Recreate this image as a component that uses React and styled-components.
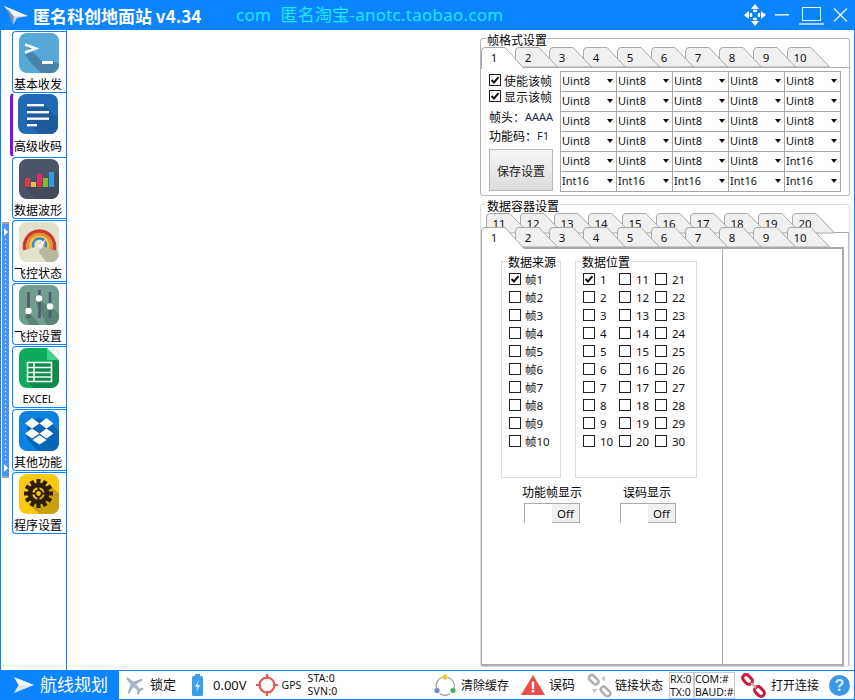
import React from "react";
import styled, { createGlobalStyle } from "styled-components";

const Global = createGlobalStyle`
  html, body { margin: 0; padding: 0; background: #fff; }
  body { font-family: "Noto Sans", "Noto Sans CJK SC", sans-serif; font-size: 12px; color: #111; }
`;

const BLUE = "#0a84ff";
const CJK = `"Noto Sans CJK SC", sans-serif`;

const Win = styled.div`
  width: 855px; height: 700px; box-sizing: border-box; display: flex; flex-direction: column;
  border-left: 1px solid ${BLUE}; border-right: 1px solid ${BLUE}; overflow: hidden; background: #fff;
`;
const TitleBar = styled.header`
  height: 30px; flex: none; margin: 0 -1px; background: ${BLUE}; display: flex; align-items: center; padding-left: 4px; color: #fff;
`;
const AppName = styled.div`
  margin-left: 5px; width: 203px; font-size: 17px; font-weight: 700; white-space: nowrap;
  font-family: ${CJK};
`;
const Slogan = styled.div`
  font-size: 17px; letter-spacing: .25px; color: #1ce8f4; white-space: pre; padding-bottom: 3px;
`;
const WinButtons = styled.div`
  margin-left: auto; margin-right: 7px; display: flex; align-items: center; gap: 9px;
`;
const Main = styled.div`flex: 1; display: flex; min-height: 0;`;
const Rail = styled.div`width: 11px; flex: none; display: flex; align-items: center;`;
const Handle = styled.div`
  width: 7px; height: 256px; margin-left: 1px; background: #4a94f4; border-top: 2px solid #9aa4b0; border-bottom: 2px solid #9aa4b0; box-sizing: border-box;
  display: flex; flex-direction: column; align-items: center; justify-content: space-between; padding: 4px 0;
`;
const HandleArrow = styled.div`
  width: 0; height: 0; border-left: 4px solid #fff; border-top: 4px solid transparent; border-bottom: 4px solid transparent;
`;
const HandleDots = styled.div`
  flex: 1; width: 1px; margin: 3px 0; background: repeating-linear-gradient(to bottom, #fff 0 1px, transparent 1px 4px);
`;
const Side = styled.nav`
  width: 54px; flex: none; border-right: 1px solid ${BLUE}; display: flex; flex-direction: column; gap: 1px; padding-top: 1px;
`;
const SideBtn = styled.div`
  height: 62px; box-sizing: border-box; display: flex; flex-direction: column; align-items: flex-start;
  border: 1px solid ${BLUE}; border-right: none; border-radius: 4px 0 0 4px;
  padding: 1px 0 0 6px;
  ${p => p.$active && `
    height: 64px; margin: -1px 0 -1px -2px; padding: 0 0 0 5px;
    border-left: 3px solid #7a10f4; border-top-color: transparent; border-bottom-color: transparent;
  `}
`;
const SideLabel = styled.div`
  width: 48px; margin-left: ${p => (p.$active ? -4 : -5)}px; text-align: center; font-size: ${p => (p.$small ? 11 : 12)}px; line-height: 16px; margin-top: ${p => (p.$active ? 4 : 3)}px; white-space: nowrap; color: #000;
  font-family: ${p => (p.$small ? `"Noto Sans", sans-serif` : CJK)};
`;
const Canvas = styled.div`flex: 1;`;
const Right = styled.div`
  width: 370px; flex: none; margin-right: 4px; padding-top: 8px; display: flex; flex-direction: column; gap: 8px; box-sizing: border-box;
`;
const Group = styled.section`
  position: relative; box-sizing: border-box; border: 1px solid ${p => p.$light ? "#dcdcdc" : "#b4b4b4"}; border-radius: 3px;
  display: flex; flex-direction: column;
  ${p => p.$grow ? "flex: 1; min-height: 0; margin-bottom: 3px;" : "height: 158px;"}
  padding-top: 8px;
`;
const GroupTitle = styled.div`
  position: absolute; left: 5px; top: -6px; background: #fff; padding: 0 1px; font-size: 12px; line-height: 14px; white-space: nowrap; color: #000;
  font-family: ${CJK}; z-index: 60;
`;
const TabRow = styled.div`
  display: flex; height: 20px; flex: none; padding-left: ${p => p.$pl || 0}px; position: relative; isolation: isolate;
`;
const TabItem = styled.div`
  position: relative; width: 34px; height: 20px; flex: none; z-index: ${p => p.$z};
`;
const TabLabel = styled.span`
  position: absolute; left: 0; top: 3px; width: 26px; text-align: center; font-size: 11.5px; line-height: 16px; color: #111;
`;
const TabSvg = styled.svg`position: absolute; left: 0; top: 0; overflow: visible;`;

function Tab({ n, z, active }) {
  const d = active
    ? "M.5 22V4Q.5 .5 4 .5H24L43.5 22"
    : "M.5 20V4Q.5 .5 4 .5H24L42.5 20Z";
  return (
    <TabItem $z={z}>
      <TabSvg width="45" height="22" viewBox="0 0 45 22">
        <path d={d} fill={active ? "#fff" : "#f0f0f0"} stroke="#a8a8a8" />
      </TabSvg>
      <TabLabel>{n}</TabLabel>
    </TabItem>
  );
}
function Tabs({ from, count = 10, pl, active }) {
  return (
    <TabRow $pl={pl}>
      {Array.from({ length: count }, (_, i) => (
        <Tab key={i} n={from + i} z={active && i === 0 ? 50 : 30 - i} active={active && i === 0} />
      ))}
    </TabRow>
  );
}
const FramePanel = styled.div`
  flex: 1; border-top: 1px solid #b4b4b4; display: flex; padding: 3px 7px 3px 8px; gap: 7px; min-height: 0;
`;
const FrameLeft = styled.div`width: 64px; flex: none; display: flex; flex-direction: column; padding-top: 1px;`;
const CheckLine = styled.label`display: flex; align-items: center; gap: 3px; height: 16px; font-size: 12px; white-space: nowrap; font-family: ${CJK};`;
const Box = styled.span`
  width: 12px; height: 12px; box-sizing: border-box; border: 1px solid #222; background: #fff; flex: none; display: flex; align-items: center; justify-content: center;
`;
const InfoLine = styled.div`
  display: flex; height: 19px; align-items: center; white-space: nowrap; font-size: 12px; color: #000; margin-top: ${p => p.$mt || 0}px;
  font-family: ${CJK};
`;
const InfoValue = styled.span`font-family: "Noto Sans", sans-serif; font-size: 11px; color: #1a2a50;`;
const SaveBtn = styled.div`
  margin-top: 4px; height: 42px; box-sizing: border-box; border: 1px solid #b8b8b8; display: flex; align-items: center; justify-content: center;
  background: linear-gradient(#f6f6f6, #dcdcdc); font-size: 12px; color: #222; font-family: ${CJK};
`;
const ComboGrid = styled.div`
  display: grid; grid-template-columns: repeat(5, 56px); grid-auto-rows: 20px; border-top: 1px solid #a8a8a8; border-left: 1px solid #a8a8a8; align-self: flex-start;
`;
const Combo = styled.div`
  box-sizing: border-box; border-right: 1px solid #a8a8a8; border-bottom: 1px solid #a8a8a8; display: flex; align-items: center; justify-content: space-between;
  padding: 0 2px 2px 1px; font-size: 11px; color: #111;
`;
const ComboArrow = styled.span`
  width: 0; height: 0; margin-right: 1px; border-top: 4px solid #111; border-left: 3.5px solid transparent; border-right: 3.5px solid transparent;
`;
const OuterPanel = styled.div`
  flex: 1; min-height: 0; margin-top: -1px; border-top: 1px solid #a8a8a8; border-right: 1px solid #c4c4c4; display: flex; flex-direction: column;
`;
const InnerTabsWrap = styled.div`margin-top: -6px; position: relative; z-index: 2;`;
const InnerPanel = styled.div`
  flex: 1; min-height: 0; display: flex; border: solid #ababab; border-width: 2px 0 2px 1px; margin-right: 4px;
`;
const DataArea = styled.div`
  width: 240px; flex: none; padding: 12px 0 0 19px; box-sizing: border-box; display: flex; flex-direction: column;
`;
const BlockRow = styled.div`display: flex; gap: 14px; height: 217px;`;
const Block = styled.div`
  position: relative; height: 217px; box-sizing: border-box; border: 1px solid #dcdcdc; padding-top: 8px; padding-left: ${p => p.$pl}px; width: ${p => p.$w}px;
`;
const BlockTitle = styled.div`
  position: absolute; left: 5px; top: -7px; background: #fff; padding: 0 1px; font-size: 12px; line-height: 14px; color: #000; white-space: nowrap; font-family: ${CJK};
`;
const SourceList = styled.div`display: flex; flex-direction: column;`;
const CheckRow = styled.label`
  display: flex; align-items: center; height: 18px; gap: ${p => p.$gap}px; font-size: 11.5px; white-space: nowrap; color: #111;
`;
const PosGrid = styled.div`
  display: grid; grid-auto-flow: column; grid-template-rows: repeat(10, 18px); grid-template-columns: repeat(3, 36px);
`;
const ToggleRow = styled.div`display: flex; margin-top: 6px; margin-left: 2px;`;
const ToggleCol = styled.div`width: 96px; display: flex; flex-direction: column; align-items: flex-start;`;
const ToggleName = styled.div`font-size: 12px; line-height: 16px; white-space: nowrap; color: #000; margin-left: ${p => p.$ml}px; font-family: ${CJK};`;
const Toggle = styled.div`
  margin-top: 3px; margin-left: 21px; width: 56px; height: 20px; box-sizing: border-box; border: 1px solid #aaa; border-bottom: 0; display: flex; justify-content: flex-end;
`;
const ToggleOff = styled.div`
  width: 27px; background: #f0f0f0; border-bottom: 1px solid #aaa; font-size: 11.5px; display: flex; align-items: center; justify-content: center; color: #111;
`;
const DetailBox = styled.div`
  flex: 1; border-left: 1px solid #ababab; border-right: 2px solid #ababab;
`;

/* status bar */
const Status = styled.footer`
  height: 30px; flex: none; margin: 0 -1px; box-sizing: border-box; border: 1px solid ${BLUE};
  display: flex; align-items: center; background: #fff;
`;
const RouteBtn = styled.div`
  width: 118px; height: 100%; flex: none; background: ${BLUE}; color: #fff; font-size: 17px; display: flex; align-items: center; gap: 6px; padding-left: 13px; box-sizing: border-box; white-space: nowrap;
  font-family: ${CJK};
`;
const RouteText = styled.span`padding-bottom: 3px;`;
const Stat = styled.span`
  margin-left: ${p => p.$ml || 0}px; font-size: ${p => p.$fs || 12}px; white-space: nowrap; color: #111; flex: none; display: flex; align-items: center;
  padding-bottom: ${p => (p.$latin ? 0 : p.$fs ? 3 : 1)}px;
  font-family: ${p => (p.$latin ? `"Noto Sans", sans-serif` : CJK)};
`;
const Spacer = styled.span`flex: 1;`;
const TwoLine = styled.div`
  margin-left: ${p => p.$ml || 0}px; display: flex; flex-direction: column; font-size: 10.5px; letter-spacing: .25px; line-height: 13px; color: #111; white-space: nowrap; flex: none;
`;
const Counter = styled(TwoLine)`
  width: ${p => p.$w}px; height: 27px; box-sizing: border-box; border: 1px solid #c8c8c8; letter-spacing: 0;
`;
const IconSlot = styled.span`margin-left: ${p => p.$ml || 0}px; margin-right: ${p => p.$mr || 0}px; display: flex; flex: none;`;

/* drawings */
const Check = () => (
  <svg width="10" height="10" viewBox="0 0 10 10"><path d="M1.5 5L4 7.5L8.5 2.2" fill="none" stroke="#111" strokeWidth="2" /></svg>
);
const Plane = () => (
  <svg width="24" height="22" viewBox="0 0 24 22">
    <path d="M0 2L9 12.5L9 21L13 14L24 12Z" fill="#c6d0dc" />
    <path d="M0 2L24 12L9 12.5Z" fill="#f4f7fa" />
    <path d="M3 4L9 21L10 12.5Z" fill="#7f93a8" />
  </svg>
);
const Icon = ({ bg, children }) => (
  <svg width="40" height="40" viewBox="0 0 40 40">
    <defs><clipPath id="ic"><rect width="40" height="40" rx="8" /></clipPath></defs>
    <g clipPath="url(#ic)">
      <rect width="40" height="40" fill={bg} />
      {children}
    </g>
  </svg>
);
const IconTerminal = () => (
  <Icon bg="#57a8d8">
    <path d="M6 12L16 17L6 22L12 30L30 48H50V36L34 28H23L6 12Z" fill="#4a83a8" />
    <path d="M6 11.5L17 15.5L6 19.5" fill="none" stroke="#fff" strokeWidth="2.4" />
    <rect x="23" y="28" width="11" height="3" fill="#fff" />
  </Icon>
);
const IconList = () => (
  <Icon bg="#2169b4">
    <path d="M9 11H26L40 25V40H22L9 30Z" fill="#1d5b9a" />
    <rect x="9" y="10" width="17" height="2.4" fill="#f4f8fc" />
    <rect x="9" y="17" width="22" height="2.4" fill="#f4f8fc" />
    <rect x="9" y="23.5" width="22" height="2.4" fill="#f4f8fc" />
    <rect x="9" y="30" width="10" height="2.4" fill="#f4f8fc" />
  </Icon>
);
const IconBars = () => (
  <Icon bg="#4c5568">
    <path d="M6 28H36V13L48 26V48H24Z" fill="#434a5a" />
    <rect x="6" y="19" width="5" height="9" fill="#d23a4a" />
    <rect x="12" y="23" width="5" height="5" fill="#e0c040" />
    <rect x="18" y="15" width="5" height="13" fill="#e02c62" />
    <rect x="24" y="19" width="5" height="9" fill="#8ab82c" />
    <rect x="30" y="13" width="5" height="15" fill="#2e9ee0" />
  </Icon>
);
const IconGauge = () => (
  <Icon bg="#e2e2cc">
    <path d="M24 16L36 22L44 44H30L20 30Z" fill="#b8b8a0" />
    <path d="M6 28A15 15 0 1 1 35 28" fill="none" stroke="#cc3b32" strokeWidth="3.6" />
    <path d="M9.5 27A11.5 11.5 0 1 1 31.5 27" fill="none" stroke="#e8922a" strokeWidth="3" />
    <path d="M12.5 26A8.5 8.5 0 1 1 28.5 26" fill="none" stroke="#f0c93c" strokeWidth="2" />
    <path d="M14.5 25.5A6.5 6.5 0 1 1 26.5 25.5" fill="none" stroke="#3f8cc0" strokeWidth="2.4" />
    <path d="M27 17L22 27L18.5 24Z" fill="#fff" />
  </Icon>
);
const IconSliders = () => (
  <Icon bg="#6f9d8e">
    <path d="M9 26L24 44H14L6 32ZM20 13L44 38V44H30L17 18ZM31 21L44 32V40L28 25Z" fill="#5a8474" />
    <g stroke="#4d5c70" strokeWidth="2.6">
      <path d="M9.5 7V33M20.5 5V33M31 7V33" />
    </g>
    <circle cx="9.5" cy="26" r="3.2" fill="#fff" />
    <circle cx="20" cy="13.5" r="3.2" fill="#fff" />
    <circle cx="31" cy="21.5" r="3.2" fill="#fff" />
  </Icon>
);
const IconSheet = () => (
  <Icon bg="#0fab5c">
    <path d="M8 34L10 14H33V8L44 18V44H20Z" fill="#0c8a4c" />
    <path d="M28 0L40 12H28Z" fill="#3fd08a" />
    <path d="M28 0H40V12Z" fill="#fff" />
    <rect x="8.5" y="14.5" width="24" height="19" fill="none" stroke="#f4fff8" strokeWidth="1.6" />
    <path d="M8 19.5H33M8 24.5H33M8 29H33M15 14V34" stroke="#f4fff8" strokeWidth="1.6" />
  </Icon>
);
const IconBoxes = () => (
  <Icon bg="#0a82e2">
    <path d="M8 15L20 6L34 14L44 24V44H22L8 28Z" fill="#0666b8" />
    <path d="M13 7L20.5 12.5L13 17.5L6 12.5ZM27.5 7L34.5 12.5L27.5 17.5L20.5 12.5ZM13 17.5L20.5 22.5L13 27.5L6 22.5ZM27.5 17.5L34.5 22.5L27.5 27.5L20.5 22.5ZM20.5 24L27.5 29L20.5 33.5L13.5 29Z" fill="#fff" />
  </Icon>
);
const gearTeeth = Array.from({ length: 12 }, (_, i) => i * 30);
const IconGear = () => (
  <Icon bg="#fbc813">
    <path d="M10 30L30 10L50 30V50H30Z" fill="#c8a010" />
    <g transform="translate(19.5 19.5)" fill="#2c1c08">
      {gearTeeth.map(a => <rect key={a} x="-2" y="-14.5" width="4" height="5" transform={`rotate(${a})`} />)}
    </g>
    <circle cx="19.5" cy="19.5" r="8.5" fill="none" stroke="#2c1c08" strokeWidth="4.4" />
    <path d="M19.5 12V27M12 19.5H27" stroke="#2c1c08" strokeWidth="2" />
    <circle cx="19.5" cy="19.5" r="3.2" fill="#fbc813" stroke="#2c1c08" strokeWidth="1.6" />
  </Icon>
);
const MoveIcon = () => (
  <svg width="22" height="22" viewBox="0 0 22 22" fill="#fff">
    <path d="M11 0L15 5H7ZM11 22L15 17H7ZM0 11L5 7V15ZM22 11L17 7V15Z" />
    <circle cx="7" cy="11" r="1.4" /><circle cx="15" cy="11" r="1.4" /><circle cx="11" cy="7" r="1.4" /><circle cx="11" cy="15" r="1.4" />
    <path d="M9 6H13V8H9ZM9 14H13V16H9ZM6 9H8V13H6ZM14 9H16V13H14Z" />
  </svg>
);
const MinIcon = () => <svg width="15" height="22" viewBox="0 0 15 22"><rect y="10" width="14" height="1.6" fill="#d8ecff" /></svg>;
const MaxIcon = () => (
  <svg width="25" height="22" viewBox="0 0 25 22" fill="none" stroke="#e8f4ff">
    <rect x="3.5" y="3.5" width="18" height="13" strokeWidth="1" />
    <path d="M0 20H25" strokeWidth="1.4" />
  </svg>
);
const CloseIcon = () => (
  <svg width="15" height="22" viewBox="0 0 15 22"><path d="M1 4.5L14 17.5M14 4.5L1 17.5" stroke="#e8f4ff" strokeWidth="1.3" /></svg>
);
const RouteIcon = () => (
  <svg width="20" height="16" viewBox="0 0 20 16"><path d="M0 0L20 8L4.5 8Z" fill="#fff" /><path d="M4.5 8H20L0 16Z" fill="#dfe8f2" /></svg>
);
const LockPlane = () => (
  <svg width="20" height="20" viewBox="0 0 20 20" fill="#a9b4c6">
    <g transform="rotate(-45 10 10)">
      <path d="M9 0H11L12 7L20 11V13L12 11L11.5 16L14 18V20L10 19L6 20V18L8.5 16L8 11L0 13V11L8 7Z" />
    </g>
  </svg>
);
const Battery = () => (
  <svg width="11" height="22" viewBox="0 0 11 22">
    <rect x="3" y="0" width="5" height="2" fill="#3c9ef0" />
    <rect x="0" y="2" width="11" height="20" rx="1.5" fill="#3c9ef0" />
    <path d="M6.5 6L3 13H5.5L4.5 18L8 11H5.5Z" fill="#d8ecff" />
  </svg>
);
const Target = () => (
  <svg width="22" height="22" viewBox="0 0 22 22" fill="none" stroke="#ee5350">
    <circle cx="11" cy="11" r="7.5" strokeWidth="2.2" />
    <path d="M11 0V5M11 17V22M0 11H5M17 11H22" strokeWidth="2.2" />
  </svg>
);
const ClearIcon = () => (
  <svg width="22" height="22" viewBox="0 0 22 22" fill="none">
    <path d="M8 3.5A8.5 8.5 0 0 0 2.5 14M5.5 19.5A9 9 0 0 0 16 19.5M20 14A8.5 8.5 0 0 0 14 3.5" stroke="#9a9a9a" strokeWidth="1.2" />
    <circle cx="11" cy="3" r="2.6" fill="#f0c030" />
    <circle cx="3" cy="16.5" r="2.6" fill="#7488c8" />
    <circle cx="19" cy="16.5" r="2.6" fill="#44b060" />
  </svg>
);
const WarnIcon = () => (
  <svg width="24" height="20" viewBox="0 0 24 20">
    <path d="M12 0L24 20H0Z" fill="#ee4b4b" />
    <rect x="10.8" y="6.5" width="2.4" height="7.5" fill="#fff" /><rect x="10.8" y="15" width="2.4" height="2.4" fill="#fff" />
  </svg>
);
const LinkBroken = () => (
  <svg width="25" height="25" viewBox="0 0 25 25" fill="none" stroke="#b0b0b0" strokeWidth="2.6">
    <rect x="-4.5" y="-2.8" width="11" height="5.6" rx="2.8" transform="translate(6 6) rotate(45)" />
    <rect x="-5.5" y="-2.8" width="11" height="5.6" rx="2.8" transform="translate(18.5 18.5) rotate(45)" />
    <path d="M14 5L18 3V9ZM5 16H11L7 20Z" fill="#c8c8c8" stroke="none" />
  </svg>
);
const LinkRed = () => (
  <svg width="25" height="25" viewBox="0 0 25 25" fill="none" stroke="#c81e3c" strokeWidth="3">
    <rect x="-5.5" y="-3.4" width="11" height="6.8" rx="3.4" transform="translate(6.5 6.5) rotate(45)" />
    <rect x="-5.5" y="-3.4" width="11" height="6.8" rx="3.4" transform="translate(18.5 18.5) rotate(45)" />
    <path d="M10 10L15 15" stroke="#e8a0b0" strokeWidth="2" />
  </svg>
);
const HelpIcon = () => (
  <svg width="21" height="21" viewBox="0 0 21 21">
    <circle cx="10.5" cy="10.5" r="10.5" fill="#3c96e8" />
    <text x="10.5" y="16" textAnchor="middle" fontSize="16" fontWeight="700" fontFamily="Liberation Sans, sans-serif" fill="#d8ecfc">?</text>
  </svg>
);

const sideItems = [
  ["基本收发", <IconTerminal />],
  ["高级收码", <IconList />, true],
  ["数据波形", <IconBars />],
  ["飞控状态", <IconGauge />],
  ["飞控设置", <IconSliders />],
  ["EXCEL", <IconSheet />, false, true],
  ["其他功能", <IconBoxes />],
  ["程序设置", <IconGear />],
];
const comboList = Array.from({ length: 30 }, (_, i) => (i < 24 ? "Uint8" : "Int16"));

export default function App() {
  return (
    <>
      <Global />
      <Win>
        <TitleBar>
          <Plane />
          <AppName>匿名科创地面站 v4.34</AppName>
          <Slogan>com  匿名淘宝-anotc.taobao.com</Slogan>
          <WinButtons><MoveIcon /><MinIcon /><MaxIcon /><CloseIcon /></WinButtons>
        </TitleBar>
        <Main>
          <Rail>
            <Handle><HandleArrow /><HandleDots /><HandleArrow /></Handle>
          </Rail>
          <Side>
            {sideItems.map(([label, icon, active, small]) => (
              <SideBtn key={label} $active={active}>
                {icon}
                <SideLabel $small={small} $active={active}>{label}</SideLabel>
              </SideBtn>
            ))}
          </Side>
          <Canvas />
          <Right>
            <Group>
              <GroupTitle>帧格式设置</GroupTitle>
              <Tabs from={1} active />
              <FramePanel>
                <FrameLeft>
                  <CheckLine><Box><Check /></Box>使能该帧</CheckLine>
                  <CheckLine><Box><Check /></Box>显示该帧</CheckLine>
                  <InfoLine $mt={3}>帧头：<InfoValue>AAAA</InfoValue></InfoLine>
                  <InfoLine>功能码：<InfoValue>F1</InfoValue></InfoLine>
                  <SaveBtn>保存设置</SaveBtn>
                </FrameLeft>
                <ComboGrid>
                  {comboList.map((c, i) => <Combo key={i}>{c}<ComboArrow /></Combo>)}
                </ComboGrid>
              </FramePanel>
            </Group>
            <Group $light $grow>
              <GroupTitle>数据容器设置</GroupTitle>
              <Tabs from={11} pl={5} />
              <OuterPanel>
                <InnerTabsWrap><Tabs from={1} pl={0} active /></InnerTabsWrap>
                <InnerPanel>
                  <DataArea>
                    <BlockRow>
                      <Block $w={60} $pl={7}>
                        <BlockTitle>数据来源</BlockTitle>
                        <SourceList>
                          {Array.from({ length: 10 }, (_, i) => (
                            <CheckRow key={i} $gap={4}><Box>{i === 0 && <Check />}</Box>帧{i + 1}</CheckRow>
                          ))}
                        </SourceList>
                      </Block>
                      <Block $w={122} $pl={7}>
                        <BlockTitle>数据位置</BlockTitle>
                        <PosGrid>
                          {Array.from({ length: 30 }, (_, i) => (
                            <CheckRow key={i} $gap={5}><Box>{i === 0 && <Check />}</Box>{i + 1}</CheckRow>
                          ))}
                        </PosGrid>
                      </Block>
                    </BlockRow>
                    <ToggleRow>
                      <ToggleCol><ToggleName $ml={19}>功能帧显示</ToggleName><Toggle><ToggleOff>Off</ToggleOff></Toggle></ToggleCol>
                      <ToggleCol><ToggleName $ml={24}>误码显示</ToggleName><Toggle><ToggleOff>Off</ToggleOff></Toggle></ToggleCol>
                    </ToggleRow>
                  </DataArea>
                  <DetailBox />
                </InnerPanel>
              </OuterPanel>
            </Group>
          </Right>
        </Main>
        <Status>
          <RouteBtn><RouteIcon /><RouteText>航线规划</RouteText></RouteBtn>
          <IconSlot $ml={5}><LockPlane /></IconSlot>
          <Stat $ml={6} $fs={13}>锁定</Stat>
          <IconSlot $ml={16}><Battery /></IconSlot>
          <Stat $ml={10} $fs={13} $latin>0.00V</Stat>
          <IconSlot $ml={9}><Target /></IconSlot>
          <Stat $ml={4} $fs={10.5} $latin>GPS</Stat>
          <TwoLine $ml={6}><span>STA:0</span><span>SVN:0</span></TwoLine>
          <Spacer />
          <IconSlot><ClearIcon /></IconSlot>
          <Stat $ml={5}>清除缓存</Stat>
          <IconSlot $ml={12}><WarnIcon /></IconSlot>
          <Stat $ml={4} $fs={13}>误码</Stat>
          <IconSlot $ml={12}><LinkBroken /></IconSlot>
          <Stat $ml={3}>链接状态</Stat>
          <Counter $ml={6} $w={25}><span>RX:0</span><span>TX:0</span></Counter>
          <Counter $w={41}><span>COM:#</span><span>BAUD:#</span></Counter>
          <IconSlot $ml={6}><LinkRed /></IconSlot>
          <Stat $ml={5}>打开连接</Stat>
          <IconSlot $ml={10} $mr={4}><HelpIcon /></IconSlot>
        </Status>
      </Win>
    </>
  );
}
